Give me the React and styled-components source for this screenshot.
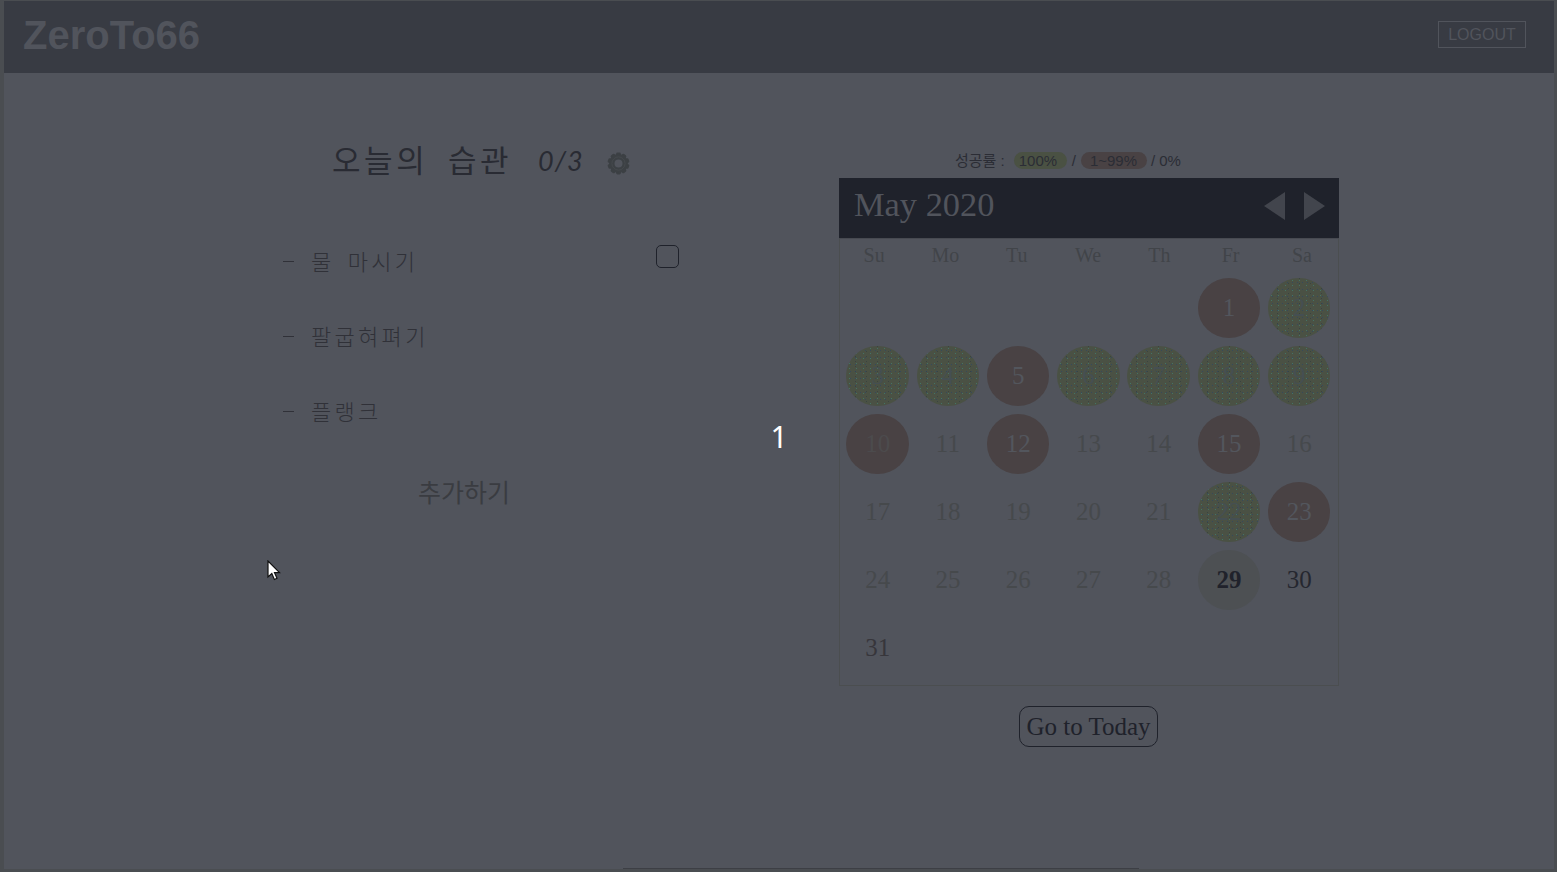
import React from "react";
import styled, { createGlobalStyle, css } from "styled-components";

const Global = createGlobalStyle`
  * { box-sizing: border-box; }
  body { margin: 0; background: #51545c; overflow: hidden; }
  button { margin: 0; padding: 0; background: none; }
`;

const sans = `"Liberation Sans", "Noto Sans CJK KR", sans-serif`;
const hand = `"Noto Sans CJK KR", sans-serif`;
const serif = `"Liberation Serif", serif`;

const Screen = styled.div`
  position: relative;
  height: 872px;
  display: flex;
  flex-direction: column;
  background: #51545c;
  border: solid #4a4d51;
  border-width: 1px 3px 3px 4px;
  overflow: hidden;
`;

const Header = styled.header`
  flex: none;
  height: 72px;
  display: flex;
  justify-content: space-between;
  align-items: flex-start;
  padding: 11px 28px 0 19px;
  background: #383b43;
  color: #51545c;
  font-family: ${sans};
`;

const Logo = styled.h1`
  margin: 0;
  font-size: 40px;
  line-height: 46px;
`;

const Logout = styled.button`
  width: 88px;
  height: 27px;
  margin-top: 9px;
  border: 1px solid #51545c;
  color: #51545c;
  font: 16px/25px ${sans};
`;

const Main = styled.main`
  flex: 1;
  display: flex;
`;

const Habits = styled.section`
  width: 835px;
  flex: none;
  padding: 63px 160px 0 278px;
`;

const TitleRow = styled.div`
  display: flex;
  align-items: center;
  height: 50px;
  padding-left: 50px;
  color: #292b33;
  font-family: ${hand};
`;

const Title = styled.h2`
  margin: -5px 0 0;
  width: 206px;
  font-size: 31px;
  font-weight: 400;
  line-height: 50px;
  letter-spacing: 3.6px;
  word-spacing: 9px;
  white-space: nowrap;
`;

const Count = styled.span`
  width: 69px;
  font: italic 27px/50px Lato, sans-serif;
  letter-spacing: 1px;
`;

const Gear = styled.svg`
  width: 23px;
  height: 23px;
  margin-top: 5px;
`;

const List = styled.ul`
  list-style: none;
  margin: 37px 0 0;
  padding: 0;
`;

const Item = styled.li`
  height: 75px;
  display: flex;
  align-items: center;
  color: #303138;
  font: 300 22px/75px ${hand};
  letter-spacing: 3.3px;
  word-spacing: 5px;
`;

const Dash = styled.span`
  width: 11px;
  height: 1px;
  margin: 2px 17px 0 1px;
  background: #303138;
`;

const Check = styled.span`
  width: 23px;
  height: 23px;
  margin: 0 0 9px auto;
  border: 1px solid #1f222b;
  border-radius: 5px;
`;

const AddButton = styled.button`
  display: block;
  margin: 23px 0 0 136px;
  border: 0;
  color: #3a3c41;
  font: 25px/40px ${hand};
`;

const Progress = styled.section`
  width: 500px;
  display: flex;
  flex-direction: column;
  align-items: center;
  padding-top: 77px;
`;

const Legend = styled.div`
  height: 28px;
  display: flex;
  align-items: center;
  align-self: flex-start;
  padding: 0 0 7px 116px;
  color: #2b2d35;
  font: 15px/20px ${sans};
  white-space: nowrap;
`;

const Pill = styled.span`
  width: ${(p) => p.$width}px;
  height: 17px;
  margin: 0 ${(p) => p.$after}px 0 ${(p) => p.$gap}px;
  padding-left: ${(p) => p.$inset}px;
  border-radius: 9px;
  background: ${(p) => p.$color};
  line-height: 18px;
`;

const MonthBar = styled.div`
  width: 500px;
  height: 60px;
  display: flex;
  align-items: flex-start;
  padding: 0 14px 0 15px;
  background: #1f222b;
  color: #51545c;
  font: 34.4px/52px ${serif};
`;

const Arrows = styled.svg`
  width: 61px;
  height: 28px;
  margin: 14px 0 0 auto;
  fill: #42454d;
`;

const CalendarBody = styled.div`
  width: 500px;
  height: 448px;
  border: 1px solid #4b4e50;
  border-top-color: #474a51;
`;

const Weekdays = styled.div`
  display: grid;
  grid-template-columns: repeat(7, 71.3px);
  height: 35px;
  margin-left: -1.5px;
  color: #414449;
  font: 20px/32px ${serif};
  text-align: center;
`;

const Days = styled.div`
  display: grid;
  grid-template-columns: repeat(7, 70.25px);
  grid-auto-rows: 68px;
  justify-items: center;
  padding: 0 0 0 2.5px;
`;

const tones = {
  past: css`color: #46494c;`,
  future: css`color: #25272f;`,
  sunday: css`color: #37363b;`,
  today: css`color: #20222b; background: #4d5053; font-weight: bold;`,
  some: css`color: #53565d; background: #494244;`,
  someMuted: css`color: #4c4b4d; background: #494244;`,
  full: css`
    color: #454f52;
    background-color: #4a5144;
    background-image:
      radial-gradient(circle, #3f8a7a99 0.6px, transparent 0.9px),
      radial-gradient(circle, #26456c99 0.6px, transparent 0.9px),
      radial-gradient(circle, #2e3a3f99 0.6px, transparent 0.9px);
    background-size: 7px 5px, 5px 7px, 11px 5px;
    background-position: 0 0, 2px 1px, 4px 3px;
  `,
};

const Day = styled.span`
  width: 62.5px;
  height: 60px;
  margin-top: 4px;
  border-radius: 50%;
  text-align: center;
  font: 25px/60px ${serif};
  ${(p) => tones[p.$tone]}
`;

const TodayButton = styled.button`
  width: 139px;
  height: 41px;
  margin: 20px 1px 0 0;
  border: 1px solid #1f222b;
  border-radius: 10px;
  color: #1f222b;
  font: 25px/38px ${serif};
  white-space: nowrap;
`;

const Countdown = styled.div`
  position: absolute;
  inset: 0;
  display: flex;
  align-items: center;
  justify-content: center;
  padding-top: 3px;
  color: #fff;
  font: 30px/40px "Noto Sans", sans-serif;
  pointer-events: none;
`;

const Pointer = styled.svg`
  position: absolute;
  left: 263px;
  top: 559px;
  width: 14px;
  height: 22px;
`;

const BottomLine = styled.div`
  position: absolute;
  left: 619px;
  bottom: 0;
  width: 516px;
  height: 1px;
  background: #3d3f45;
`;

const full = new Set([2, 3, 4, 6, 7, 8, 9, 22]);
const some = new Set([1, 5, 12, 15, 23]);

function toneOf(day) {
  if (full.has(day)) return "full";
  if (some.has(day)) return "some";
  if (day === 10) return "someMuted";
  if (day === 29) return "today";
  if (day === 31) return "sunday";
  return day > 29 ? "future" : "past";
}

const teeth = Array.from({ length: 10 }, (_, i) => i * 36);

export default function App() {
  return (
    <>
      <Global />
      <Screen>
        <Header>
          <Logo>ZeroTo66</Logo>
          <Logout>LOGOUT</Logout>
        </Header>
        <Main>
          <Habits>
            <TitleRow>
              <Title>오늘의 습관</Title>
              <Count>0/3</Count>
              <Gear viewBox="-11.5 -11.5 23 23">
                {teeth.map((a) => (
                  <rect key={a} x="-2.4" y="-11" width="4.8" height="5" rx="1.4" fill="#3c4044" transform={`rotate(${a})`} />
                ))}
                <circle r="6.7" fill="none" stroke="#3c4044" strokeWidth="5.4" />
                <circle r="6.6" fill="none" stroke="#45494d" strokeWidth="1" />
              </Gear>
            </TitleRow>
            <List>
              {["물 마시기", "팔굽혀펴기", "플랭크"].map((name, i) => (
                <Item key={name}>
                  <Dash />
                  {name}
                  {i === 0 && <Check />}
                </Item>
              ))}
            </List>
            <AddButton>추가하기</AddButton>
          </Habits>
          <Progress>
            <Legend>
              성공률 :
              <Pill $width={53} $gap={9} $after={5} $inset={5} $color="#4a5143">100%</Pill>
              /
              <Pill $width={66} $gap={5} $after={4} $inset={9} $color="#494244">1~99%</Pill>
              / 0%
            </Legend>
            <MonthBar>
              May 2020
              <Arrows viewBox="0 0 61 28">
                <path d="M0 14L21 0V28ZM40 0L61 14L40 28Z" />
              </Arrows>
            </MonthBar>
            <CalendarBody>
              <Weekdays>
                {["Su", "Mo", "Tu", "We", "Th", "Fr", "Sa"].map((d) => (
                  <span key={d}>{d}</span>
                ))}
              </Weekdays>
              <Days>
                {Array.from({ length: 5 }, (_, i) => (
                  <span key={`blank${i}`} />
                ))}
                {Array.from({ length: 31 }, (_, i) => i + 1).map((d) => (
                  <Day key={d} $tone={toneOf(d)}>{d}</Day>
                ))}
              </Days>
            </CalendarBody>
            <TodayButton>Go to Today</TodayButton>
          </Progress>
        </Main>
        <Countdown>1</Countdown>
        <Pointer viewBox="0 0 14 22">
          <path d="M1 1V17L4.8 13.6L7.4 19.5L10 18.3L7.5 12.7H12.5Z" fill="#fff" stroke="#111" strokeWidth="1.2" />
        </Pointer>
        <BottomLine />
      </Screen>
    </>
  );
}
